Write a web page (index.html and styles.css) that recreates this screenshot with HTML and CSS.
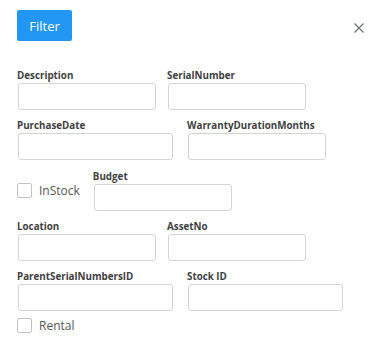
FILE: index.html
```html
<!DOCTYPE html>
<html>
<head>
<meta charset="utf-8">
<link rel="stylesheet" href="styles.css">
</head>
<body>
<div class="panel">
  <div class="header">
    <button class="btn-filter">Filter</button>
    <span class="close" aria-label="close">
      <svg width="10" height="10" viewBox="0 0 10 10"><path d="M0.5 0.5 L9.5 9.5 M9.5 0.5 L0.5 9.5" stroke="#6b6f73" stroke-width="1.2" fill="none"/></svg>
    </span>
  </div>
  <div class="form">
    <div class="row">
      <div class="field"><label>Description</label><input class="w138"></div>
      <div class="field g11"><label>SerialNumber</label><input class="w138"></div>
    </div>
    <div class="row">
      <div class="field"><label>PurchaseDate</label><input class="w155"></div>
      <div class="field g14"><label>WarrantyDurationMonths</label><input class="w138"></div>
    </div>
    <div class="row row-check">
      <label class="check"><span class="box"></span><span class="check-text">InStock</span></label>
      <div class="field g13"><label>Budget</label><input class="w138"></div>
    </div>
    <div class="row">
      <div class="field"><label>Location</label><input class="w138"></div>
      <div class="field g11"><label>AssetNo</label><input class="w138"></div>
    </div>
    <div class="row">
      <div class="field"><label>ParentSerialNumbersID</label><input class="w155"></div>
      <div class="field g14"><label>Stock ID</label><input class="w155"></div>
    </div>
    <div class="row last">
      <label class="check"><span class="box"></span><span class="check-text">Rental</span></label>
    </div>
  </div>
</div>
</body>
</html>
```
FILE: styles.css
```css
* { box-sizing: border-box; }
html, body { margin: 0; padding: 0; background: #fff; }
body { font-family: "Open Sans", "Noto Sans", sans-serif; color: #444; }
.panel { padding: 10px 8px 0 17px; width: 372px; height: 345px; }
.header { display: flex; justify-content: space-between; align-items: flex-start; height: 60px; }
.btn-filter {
  width: 55px; height: 31px; background: #2196f3; color: #fff; border: none;
  border-radius: 2px; font-family: "Open Sans", sans-serif; font-size: 13px; padding: 0;
}
.close { margin-top: 13px; margin-right: 0; width: 10px; height: 10px; display: block; line-height: 0; }
.form { display: flex; flex-direction: column; }
.row { display: flex; align-items: flex-start; height: 50px; }
.field { display: flex; flex-direction: column; }
.field label { font-size: 9.8px; font-weight: 700; color: #3f3f3f; line-height: 12px; height: 13px; }
.field input {
  margin-left: 1px; height: 27px; border: 1px solid #d4d4d4; border-radius: 3px; background: #fff;
}
.w138 { width: 138px; }
.w155 { width: 155px; }
.g11 { margin-left: 11px; }
.g13 { margin-left: 13px; }
.g14 { margin-left: 14px; }
.row-check { align-items: flex-start; margin-top: 1px; }
.check { display: flex; align-items: center; margin-top: 11px; }
.box { width: 15px; height: 15px; border: 1px solid #c4c4c4; border-radius: 2px; display: block; }
.check-text { margin-left: 7px; font-size: 12px; color: #555; }
.row.last { height: auto; }
.row.last .check { margin-top: -4px; }
```
